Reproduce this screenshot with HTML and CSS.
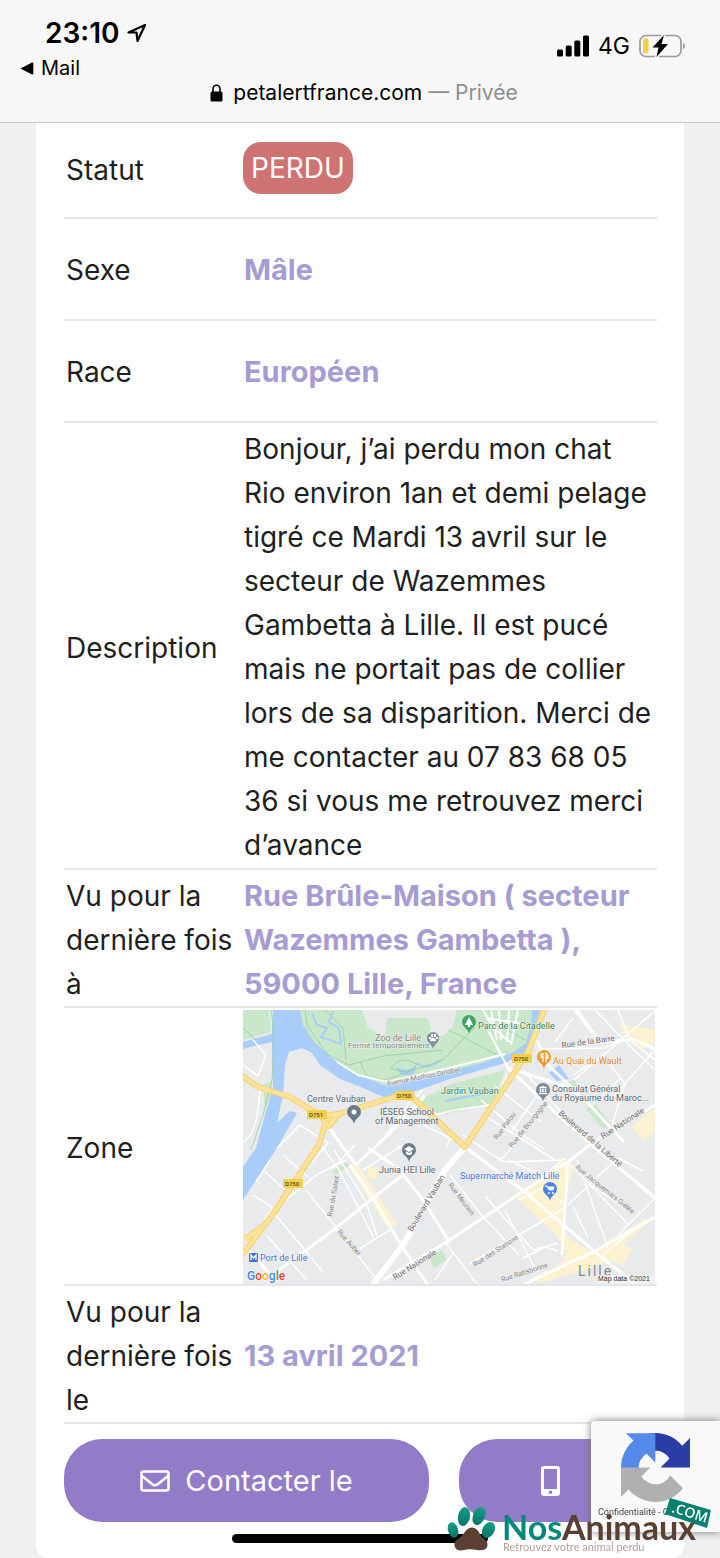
FILE: index.html
```html
<!DOCTYPE html>
<html lang="fr">
<head>
<meta charset="utf-8">
<meta name="viewport" content="width=device-width, initial-scale=1">
<title>petalertfrance.com</title>
<link rel="stylesheet" href="styles.css">
</head>
<body>
<header class="browser-bar">
  <div class="status-row">
    <div class="status-left">
      <div class="clock">
        <span>23:10</span>
        <svg width="20" height="20" viewBox="0 0 20 20" aria-hidden="true"><path d="M18 2 1.500 9.500H9.500L10.500 18Z" fill="none" stroke="#000" stroke-width="2.200" stroke-linejoin="round"/></svg>
      </div>
      <a class="back-app" href="#"><svg width="14" height="13" viewBox="0 0 14 13" aria-hidden="true"><path d="M0.500 6.500 12 .6Q13.300 .2 13.300 1.500V11.500Q13.300 12.800 12 12.400Z"/></svg>Mail</a>
    </div>
    <div class="status-right">
      <svg width="32" height="22" viewBox="0 0 32 22" aria-hidden="true"><rect y="14.500" width="6" height="7" rx="1.500"/><rect x="8.700" y="10.500" width="6" height="11" rx="1.500"/><rect x="17.300" y="5.500" width="6" height="16" rx="1.500"/><rect x="26" y=".5" width="6" height="21" rx="1.500"/></svg>
      <span class="network">4G</span>
      <svg width="47" height="24" viewBox="0 0 47 24" aria-hidden="true"><rect x="1" y="1.500" width="41" height="21" rx="6" fill="none" stroke="#9b9b9b" stroke-width="1.700"/><path d="M44 8.500Q48 12 44 15.500Z" fill="#9b9b9b"/><rect x="4" y="4.500" width="5.500" height="15" rx="2" fill="#f5ce47"/><path d="M25 1 13.500 13.500H19.500L17.500 23 29 10H22.500Z" stroke="#f8f8f8" stroke-width="3"/><path d="M25 1 13.500 13.500H19.500L17.500 23 29 10H22.500Z"/></svg>
    </div>
  </div>
  <div class="address">
    <svg width="13" height="18" viewBox="0 0 13 18" aria-hidden="true"><rect x=".5" y="7.500" width="12" height="10" rx="1.500"/><path d="M3 8V5a3.500 3.800 0 0 1 7 0V8" fill="none" stroke="#000" stroke-width="1.600"/></svg>
    <span>petalertfrance.com <span class="private">— Privée</span></span>
  </div>
</header>

<main class="card">
  <table class="details">
    <tbody>
      <tr class="row-first"><th scope="row">Statut</th><td><span class="status-badge">PERDU</span></td></tr>
      <tr class="row-tall"><th scope="row">Sexe</th><td class="accent">Mâle</td></tr>
      <tr class="row-tall"><th scope="row">Race</th><td class="accent">Européen</td></tr>
      <tr class="row-text"><th scope="row">Description</th><td>Bonjour, j’ai perdu mon chat<br>Rio environ 1an et demi pelage<br>tigré ce Mardi 13 avril sur le<br>secteur de Wazemmes<br>Gambetta à Lille. Il est pucé<br>mais ne portait pas de collier<br>lors de sa disparition. Merci de<br>me contacter au 07 83 68 05<br>36 si vous me retrouvez merci<br>d’avance</td></tr>
      <tr><th scope="row">Vu pour la dernière fois à</th><td class="accent">Rue Brûle-Maison ( secteur Wazemmes Gambetta ), 59000 Lille, France</td></tr>
      <tr class="row-map"><th scope="row">Zone</th><td>
        <svg class="map" viewBox="0 0 412 274" role="img" aria-label="Carte de la zone">
          <rect width="412" height="274" fill="#e9eaeb"/>
          <g fill="#c9e8ca">
            <path d="M0 0H26L28 22 0 30Z"/>
            <path d="M57 0H293L289 22 283 36 262 50 205 63 165 76 145 76 112 64 72 34 60 15Z"/>
            <path d="M205 75 262 60 250 93 202 104 188 101 172 90 190 84Z"/>
            <path d="M20 75 29 70V83L22 100Z"/>
            <path d="M323 72 331 70 341 86 335 90ZM343 99 352 94 369 115 360 119Z"/>
            <path d="M89 161 103 152 106 156 92 165ZM186 247 199 240 204 250 191 258Z"/>
          </g>
          <path d="M119 0H214L209 18 200 26H138L125 18Z" fill="#e9eaeb"/>
          <path d="M144 8H184L188 18 184 26H142Z" fill="#c9e8ca"/>
          <g fill="#a8cdfa">
            <path d="M30 0H57L60 15 72 33 94 52 120 67 144 76 207 61 235 54 269 43 283 33 288 15 289 0H297L293 20 283 42 262 53 207 69 167 83 143 88 120 78 97 69 77 55 69 43 59 38 46 42 42 55 40 85 34 113 47 101 54 103 34 138 0 190V157L13 138 22 105 30 78 29 32 0 39V32L29 24Z"/>
            <path d="M306 63 316 55 326 69 314 71Z"/>
            <path d="M152 56Q165 64 174 55L170 65 158 65Z"/>
          </g>
          <g fill="none" stroke="#a8cdfa" stroke-width="2"><path d="M69 3 74 15 84 18 78 27 98 34 96 18 86 12 90 1M174 53Q184 61 197 50M202 91 223 87 250 82"/></g>
          <g fill="#fdf2d0">
            <path d="M105 156 114 153 155 216 145 219ZM126 155 135 158 133 170 124 168Z"/>
            <path d="M322 148 330 158 319 208 325 228 350 243 367 228 377 225 402 208 405 213 380 235 390 238 380 255 366 250 347 258 297 273 290 267 317 255 324 242 310 222 270 185 307 165 314 152Z"/>
            <path d="M376 14 412 20V32L398 39 381 24ZM388 117 412 98V120L402 132Z"/>
          </g>
          <g fill="none" stroke="#92cda0" stroke-width=".8"><path d="M28 0Q32 20 29 70L20 105 8 140M62 0 64 15 84 44 106 55 140 46 200 40M82 0 100 18 103 50M117 52 124 66 142 70 200 50 232 17M148 58Q158 44 174 54Q165 67 148 58M0 18 12 29M205 20Q228 30 262 50M246 0Q256 18 282 30"/></g>
          <g fill="none" stroke="#fff" stroke-width="1.500">
            <path d="M0 55 15 66 23 45 10 30M0 132Q15 125 17 78M34 138 57 115 85 133 65 158M20 160 46 183M40 145 65 167M10 185 30 198 21 210M13 172 27 150M78 135 96 160 130 226M103 150 75 164 39 193M63 180 92 216 134 270M31 203 80 262M24 226 64 270M91 140 123 192 134 226M116 239 147 220M112 135 90 158M120 160 160 135M170 88 135 136M180 80 170 90M155 102 210 130M192 105 212 100 247 95M204 137 209 122M244 107 312 150M220 125 250 145 262 152 322 150M238 90 285 130M252 76 298 112M264 65 245 107M280 60 318 102M298 80 268 122M331 70 412 1M330 8 312 32M352 0 386 35 412 60M300 39 360 38 385 29 412 50M330 65 360 45 382 74 369 115M369 88 412 40M350 94 378 68M375 0 387 30M335 0 357 32"/>
            <path d="M302 140 280 125 256 152M322 148 300 166 265 150M325 152 386 215M334 150 365 238M325 195 345 176 375 148 400 161M322 194 300 178 275 190M330 196 345 228M348 175 386 201M375 225 412 188M242 186 290 240 315 233M207 165 240 207 276 245M262 200 294 262M280 248 302 237 315 241M226 254 276 225 320 199M202 232 234 274M210 243 192 270M360 245 390 220"/>
          </g>
          <g fill="none" stroke="#fff" stroke-width="2"><path d="M94 52 115 65 145 72 202 59 262 44M245 20 267 62M240 0Q250 20 267 32M248 0 254 30M256 0 258 30M266 0 264 32M275 0 268 35M243 8 280 14"/></g>
          <g fill="none" stroke="#fff" stroke-width="4" stroke-linejoin="round">
            <path d="M222 137 202 160 160 235 130 274" stroke-width="6"/>
            <path d="M33 262 84 225 130 188 160 165M222 137 282 182 352 242 392 274M265 58 312 102 349 135 412 188M412 95 349 133 325 152 279 182 202 233 140 270M107 155 130 188 160 238 184 274M84 115 113 155 145 125 182 86M125 138 155 158 180 190 207 233M265 58 325 77 343 91 381 132M294 30 304 54 343 91M325 152 319 245M412 207 352 241 282 274M387 28 412 39M332 0 357 32 386 30M2 236 32 270" stroke-width="3"/>
          </g>
          <g fill="none" stroke="#f6d26b" stroke-width="6" stroke-linejoin="round"><path d="M-2 65 15 77 47 87 78 106 96 104 154 86 170 88 222 137 285 42 302-2M84 108 76 135 30 204 3 240-2 245M78 106 86 116 96 104M2 229 22 215"/></g>
          <g fill="none" stroke="#fae29a" stroke-width="4" stroke-linejoin="round"><path d="M-2 65 15 77 47 87 78 106 96 104 154 86 170 88 222 137 285 42 302-2M84 108 76 135 30 204 3 240-2 245M78 106 86 116 96 104M2 229 22 215"/></g>
          <g fill="#f4cf4c"><rect x="64" y="100" width="20" height="9" rx="1"/><rect x="152" y="81" width="19" height="9" rx="1"/><rect x="269" y="44" width="20" height="9" rx="1"/><rect x="40" y="169" width="20" height="9" rx="1"/></g>
          <g class="map-shield"><text x="66" y="107">D751</text><text x="154" y="88">D750</text><text x="271" y="51">D750</text><text x="42" y="176">D750</text></g>

          <g transform="translate(190 39)"><path d="M0 0C-1-5-6-6-6-11A6 6 0 0 1 6-11C6-6 1-5 0 0Z" fill="#84909a"/><path d="M-3-9Q0-14 3-9Q3-7 0-8Q-3-7-3-9ZM-4-12h2v2h-2ZM-2-15h2v3h-2ZM1-15h2v3H1ZM3-12h2v2H3Z" fill="#fff"/></g>
          <g transform="translate(111 114)"><path d="M0 0C-1-6-7-7-7-12A7 7 0 0 1 7-12C7-7 1-6 0 0Z" fill="#697c8b"/><circle cy="-12" r="2.500" fill="#fff"/></g>
          <g transform="translate(166 152)"><path d="M0 0C-1-6-7-7-7-12A7 7 0 0 1 7-12C7-7 1-6 0 0Z" fill="#697c8b"/><path d="M-5-13 0-16 5-13 0-10ZM-3-11 0-9 3-11V-8Q0-6-3-8Z" fill="#fff"/></g>
          <g transform="translate(226 24)"><path d="M0 0C-1-6-7-7-7-12A7 7 0 0 1 7-12C7-7 1-6 0 0Z" fill="#43a563"/><path d="M0-17 4-9H1V-7H-1V-9H-4Z" fill="#fff"/></g>
          <g transform="translate(301 59)"><path d="M0 0C-1-6-7-7-7-12A7 7 0 0 1 7-12C7-7 1-6 0 0Z" fill="#eb9c2e"/><path d="M-3-16V-12H-1V-7M-1-16V-12M2-7V-16Q4-15 4-11H2" fill="none" stroke="#fff" stroke-width="1.300"/></g>
          <g transform="translate(300 92)"><path d="M0 0C-1-6-7-7-7-12A7 7 0 0 1 7-12C7-7 1-6 0 0Z" fill="#7b8b99"/><path d="M-4-14 0-16 4-14ZM-3-13h1v3h-1ZM-.5-13h1v3h-1ZM2-13h1v3H2ZM-4-9H4v1H-4Z" fill="#fff" stroke="#fff" stroke-width=".5"/></g>
          <g transform="translate(307 191)"><path d="M0 0C-1-6-7-7-7-12A7 7 0 0 1 7-12C7-7 1-6 0 0Z" fill="#4d82ea"/><path d="M-5-15H-3L-1-11H3L4-14H-2Z" fill="#fff" stroke="#fff"/><circle cx="-1" cy="-8" r="1" fill="#fff"/><circle cx="3" cy="-8" r="1" fill="#fff"/></g>

          <g class="map-label">
            <text x="132" y="31" class="soft">Zoo de Lille</text>
            <text x="105" y="38" class="tiny soft">Fermé temporairement</text>
            <text x="64" y="92">Centre Vauban</text>
            <text x="137" y="105">IÉSEG School</text>
            <text x="132" y="114">of Management</text>
            <text x="136" y="163">Junia HEI Lille</text>
            <text x="309" y="82">Consulat Général</text>
            <text x="309" y="91">du Royaume du Maroc...</text>
            <text x="235" y="19" class="green">Parc de la Citadelle</text>
            <text x="198" y="84" class="green">Jardin Vauban</text>
            <text x="310" y="54" class="orange">Au Quai du Wault</text>
            <text x="217" y="169" class="blue">Supermarché Match Lille</text>
            <text x="17" y="251" class="blue">Port de Lille</text>
          </g>
          <rect x="6" y="243" width="9" height="9" rx="1" fill="#4373cb"/><path d="M8 250V245L10.500 248 13 245V250" fill="none" stroke="#fff" stroke-width="1.300"/>
          <g class="map-street">
            <text transform="translate(319 38) rotate(-8)">Rue de la Barre</text>
            <text transform="translate(144 76) rotate(-11)" class="mini">Avenue Mathias Delobel</text>
            <text transform="translate(254 130) rotate(-53)" class="mini">Rue Patou</text>
            <text transform="translate(269 138) rotate(-51)" class="mini">Rue de Bourgogne</text>
            <text transform="translate(315 104) rotate(41)">Boulevard de la Liberté</text>
            <text transform="translate(360 129) rotate(-33)">Rue Nationale</text>
            <text transform="translate(332 158) rotate(39)" class="mini">Rue Jacquemars Giélée</text>
            <text transform="translate(205 175) rotate(53)" class="mini">Rue Meurein</text>
            <text transform="translate(89 207) rotate(-80)" class="mini">Rue du Sabot</text>
            <text transform="translate(94 222) rotate(49)" class="mini">Rue Auber</text>
            <text transform="translate(169 222) rotate(-59)">Boulevard Vauban</text>
            <text transform="translate(152 270) rotate(-32)">Rue Nationale</text>
            <text transform="translate(232 257) rotate(-33)" class="mini">Rue des Stations</text>
            <text transform="translate(259 272) rotate(-18)" class="mini">Rue Ratisbonne</text>
          </g>
          <text x="335" y="266" class="map-city">Lille</text>
          <rect x="354" y="265" width="58" height="9" fill="#f3f3f3" opacity=".7"/>
          <text x="355" y="271" class="map-credit">Map data ©2021</text>
          <text x="4" y="270" class="map-brand"><tspan fill="#4285f4">G</tspan><tspan fill="#ea4335">o</tspan><tspan fill="#fbbc05">o</tspan><tspan fill="#4285f4">g</tspan><tspan fill="#34a853">l</tspan><tspan fill="#ea4335">e</tspan></text>
        </svg>
      </td></tr>
      <tr><th scope="row">Vu pour la dernière fois le</th><td class="accent">13 avril 2021</td></tr>
    </tbody>
  </table>
  <div class="actions">
    <button type="button" class="contact contact-mail"><svg width="30" height="22" viewBox="0 0 30 22" aria-hidden="true"><rect x="1.500" y="1.500" width="27" height="19" rx="2" fill="none" stroke="#fff" stroke-width="2.500"/><path d="M2 6 12 14Q15 16.500 18 14L28 6" fill="none" stroke="#fff" stroke-width="2.500"/></svg>Contacter le</button>
    <button type="button" class="contact contact-phone" aria-label="Téléphoner"><svg width="19" height="30" viewBox="0 0 19 30" aria-hidden="true"><path fill="#fff" fill-rule="evenodd" d="M3 0H16Q19 0 19 3V27Q19 30 16 30H3Q0 30 0 27V3Q0 0 3 0ZM3 3V23H16V3ZM9.500 24.500A1.800 1.800 0 1 0 9.500 28.100A1.800 1.800 0 1 0 9.500 24.500Z"/></svg></button>
  </div>
</main>

<aside class="captcha">
  <svg width="69" height="69" viewBox="0 0 64 64" aria-hidden="true"><path fill="#2a3da6" d="M64 31.955l-.033-1.370V4.687l-7.160 7.160C50.948 4.674 42.033.093 32.050.093c-10.400 0-19.622 4.960-25.458 12.640l11.736 11.860a15.550 15.550 0 0 1 4.754-5.334c2.050-1.600 4.952-2.906 8.968-2.906.485 0 .860.057 1.135.163 4.976.393 9.288 3.140 11.828 7.124l-8.307 8.307L64 31.953"/><path fill="#5589ea" d="M31.862.094l-1.370.033H4.594l7.160 7.160C4.580 13.147 0 22.060 0 32.046c0 10.400 4.960 19.622 12.640 25.458L24.500 45.768a15.550 15.550 0 0 1-5.334-4.754c-1.600-2.050-2.906-4.952-2.906-8.968 0-.485.057-.860.163-1.135.393-4.976 3.140-9.288 7.124-11.828l8.307 8.307L31.860.095"/><path fill="#b0b0b0" d="M.001 32.045l.033 1.370v25.898l7.160-7.160c5.860 7.173 14.774 11.754 24.760 11.754 10.400 0 19.622-4.960 25.458-12.640l-11.736-11.860a15.550 15.550 0 0 1-4.754 5.334c-2.050 1.600-4.952 2.906-8.968 2.906-.485 0-.860-.057-1.135-.163-4.976-.393-9.288-3.140-11.828-7.124l8.307-8.307-17.292-.010"/></svg>
  <div class="captcha-links"><a href="#">Confidentialité</a> - <a href="#">Conditions</a></div>
</aside>

<div class="home-indicator"></div>

<svg class="site-logo" width="280" height="72" viewBox="0 0 280 72" role="img" aria-label="NosAnimaux.com">
  <defs>
    <linearGradient id="teal" x1="0" y1="0" x2="0" y2="1"><stop offset="0" stop-color="#16a089"/><stop offset="1" stop-color="#007566"/></linearGradient>
  </defs>
  <g fill="url(#teal)">
    <ellipse cx="24" cy="30.500" rx="6" ry="9.500" transform="rotate(12 24 30.500)"/>
    <ellipse cx="39" cy="30" rx="6" ry="9.500" transform="rotate(22 39 30)"/>
    <ellipse cx="13" cy="44" rx="5" ry="8" transform="rotate(-18 13 44)"/>
    <ellipse cx="48.500" cy="44" rx="6" ry="8.500" transform="rotate(28 48.500 44)"/>
  </g>
  <path fill="#5a4032" d="M32 41.500C25 42 24 50 18 53C12 56 14 65 21 64.500C26 64 28 63 32 63.500C36 63 39 65 43 64C49 63 49 55 43 52C39 49 39 42 32 41.500Z"/>
  <text x="62" y="54" class="logo-name"><tspan class="logo-nos">Nos</tspan><tspan class="logo-animaux">Animaux</tspan></text>
  <text x="63" y="65" class="logo-tag">Retrouvez votre animal perdu</text>
  <path d="M230 12 271 24 267 42 225 28Z" fill="#05826f"/>
  <text class="logo-com" transform="translate(231 26) rotate(17)">.COM</text>
</svg>
</body>
</html>
```
FILE: styles.css
```css
* { box-sizing: border-box; }

body {
  margin: 0;
  min-height: 100vh;
  background: #f0f0f3;
  color: #1f1f21;
  font-family: Inter, "Liberation Sans", sans-serif;
  font-size: 28px;
  line-height: 44px;
}

svg { display: block; flex: none; }
a { color: inherit; text-decoration: none; }

.browser-bar {
  padding: 18px 34px 16px 20px;
  background: #f7f7f7;
  border-bottom: 1px solid #c6c6c8;
  color: #000;
}
.status-row { display: flex; justify-content: space-between; align-items: flex-start; }
.clock {
  display: flex;
  align-items: center;
  gap: 7px;
  padding-left: 25px;
  font-size: 28px;
  font-weight: 600;
  line-height: 30px;
}
.back-app {
  display: flex;
  align-items: center;
  gap: 7px;
  margin-top: 8px;
  font-size: 20px;
  line-height: 24px;
}
.status-right { display: flex; align-items: center; gap: 9px; margin-top: 14px; font-size: 24px; line-height: 28px; }
.network { font-size: 23px; }
.address {
  display: flex;
  justify-content: center;
  align-items: center;
  gap: 10px;
  padding-left: 22px;
  font-size: 21px;
  line-height: 26px;
}
.private { color: #8e8e92; }

.card {
  margin: 0 36px;
  padding: 0 27px 36px 28px;
  background: #fff;
  border-radius: 0 0 12px 12px;
}
.details { width: 100%; border-collapse: separate; border-spacing: 0; table-layout: fixed; }
.details th, .details td {
  padding: 4px 2px 0;
  border-bottom: 2px solid #e3e5eb;
  text-align: left;
  vertical-align: middle;
  font-weight: 400;
}
.details th { width: 178px; padding-right: 0; }
.details .accent { color: #a79bd3; font-size: 29px; font-weight: 700; }
.details .row-first th { padding-top: 0; }
.details .row-first td { padding: 19px 1px 23px; }
.row-tall th, .row-tall td { height: 102px; }
.details .row-tall th, .details .row-tall td { padding-top: 2px; }
.details .row-text td { padding: 4px 0 1px 2px; white-space: nowrap; }
.details .row-map td { padding: 2px 2px 0 1px; }
.status-badge {
  display: block;
  width: max-content;
  padding: 4px 8px;
  border-radius: 18px;
  background: #ce7272;
  color: #fff;
}

.map { width: 100%; height: auto; font-family: Roboto, sans-serif; }
.map-shield { font-size: 6px; font-weight: 500; fill: #5a4a10; }
.map-label { font-size: 9px; fill: #566673; stroke: #f4f4f4; stroke-width: 1px; paint-order: stroke; }
.map-label .soft { fill: #7a868e; }
.map-label .tiny { font-size: 8px; }
.map-label .green { fill: #348651; }
.map-label .orange { fill: #d9892b; }
.map-label .blue { fill: #4478d4; }
.map-street { font-size: 8px; fill: #6c6c6c; stroke: #f4f4f4; stroke-width: 1px; paint-order: stroke; }
.map-street .mini { font-size: 7px; fill: #808080; }
.map-city { font-size: 14px; fill: #888; letter-spacing: 2px; }
.map-credit { font-size: 7px; fill: #333; font-family: "Liberation Sans", sans-serif; }
.map-brand { font-size: 12px; font-weight: 500; stroke: #fff; stroke-width: 1px; paint-order: stroke; }

.actions { display: grid; grid-template-columns: 365fr 198fr; gap: 30px; padding-top: 15px; }
.contact {
  display: flex;
  align-items: center;
  justify-content: center;
  height: 83px;
  padding: 0;
  border: 0;
  border-radius: 38px;
  background: #927cc8;
  color: #fff;
  font: inherit;
}
.contact-mail { gap: 15px; font-size: 29px; }
.contact-phone { padding-right: 16px; }

.captcha {
  position: fixed;
  right: 0;
  bottom: 26px;
  width: 129px;
  height: 111px;
  padding: 12px 0 0 7px;
  border-radius: 4px 0 0 4px;
  background: #f9f9f9;
  box-shadow: 0 0 8px #777;
  color: #444;
}
.captcha svg { margin-left: 23px; }
.captcha-links { margin-top: 4px; font-family: Roboto, sans-serif; font-size: 9px; line-height: 12px; white-space: nowrap; }

.home-indicator {
  position: fixed;
  bottom: 15px;
  left: 50%;
  width: 256px;
  height: 9px;
  margin-left: -128px;
  border-radius: 5px;
  background: #000;
}
.site-logo { position: fixed; right: 0; bottom: 0; }
.logo-name { font-family: Lato, sans-serif; font-size: 34px; font-weight: 700; }
.logo-nos { fill: #00897a; }
.logo-animaux { fill: #5a4032; }
.logo-tag { font-family: Lato, sans-serif; font-size: 11px; fill: #b5a191; }
.logo-com { font-family: "Open Sans", sans-serif; font-size: 14px; font-weight: 600; fill: #fff; }
```
